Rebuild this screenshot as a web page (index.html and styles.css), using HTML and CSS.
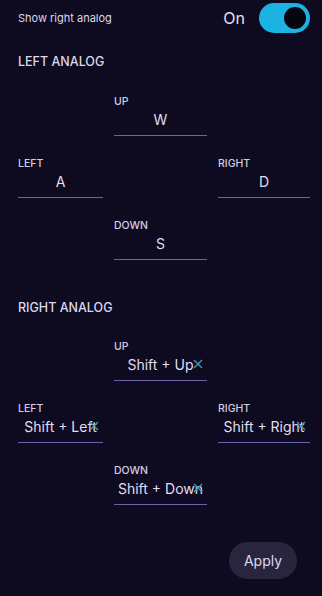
FILE: index.html
```html
<!DOCTYPE html>
<html>
<head>
<meta charset="utf-8">
<link rel="stylesheet" href="styles.css">
</head>
<body>
<div class="page">
  <div class="header">
    <span class="header-label">Show right analog</span>
    <div class="toggle-group">
      <span class="toggle-text">On</span>
      <span class="switch"><span class="knob"></span></span>
    </div>
  </div>

  <div class="section-title">LEFT ANALOG</div>
  <div class="pad">
    <div class="field up"><div class="label">UP</div><div class="value">W</div></div>
    <div class="field left"><div class="label">LEFT</div><div class="value">A</div></div>
    <div class="field right"><div class="label">RIGHT</div><div class="value">D</div></div>
    <div class="field down"><div class="label">DOWN</div><div class="value">S</div></div>
  </div>

  <div class="section-title second">RIGHT ANALOG</div>
  <div class="pad second">
    <div class="field up"><div class="label">UP</div><div class="value">Shift + Up<svg class="clear" viewBox="0 0 10 10"><path d="M1 1 L9 9 M9 1 L1 9"/></svg></div></div>
    <div class="field left"><div class="label">LEFT</div><div class="value">Shift + Left<svg class="clear" viewBox="0 0 10 10"><path d="M1 1 L9 9 M9 1 L1 9"/></svg></div></div>
    <div class="field right"><div class="label">RIGHT</div><div class="value">Shift + Right<svg class="clear" viewBox="0 0 10 10"><path d="M1 1 L9 9 M9 1 L1 9"/></svg></div></div>
    <div class="field down"><div class="label">DOWN</div><div class="value">Shift + Down<svg class="clear" viewBox="0 0 10 10"><path d="M1 1 L9 9 M9 1 L1 9"/></svg></div></div>
  </div>

  <div class="footer">
    <button class="apply">Apply</button>
  </div>
</div>
</body>
</html>
```

FILE: styles.css
```css
html, body {
  margin: 0;
  padding: 0;
  background: #0e0a1f;
}
body {
  font-family: Inter, "Noto Sans", sans-serif;
  color: #dcd8ec;
  width: 322px;
  height: 596px;
  overflow: hidden;
}
.page {
  padding: 0 12px 0 18px;
}
.header {
  height: 36px;
  display: flex;
  align-items: center;
  justify-content: space-between;
}
.header-label {
  font-size: 11px;
  color: #dcd8ec;
}
.toggle-group {
  display: flex;
  align-items: center;
  gap: 14px;
}
.toggle-text {
  font-size: 16px;
  color: #e4e0f0;
}
.switch {
  width: 51px;
  height: 30px;
  border-radius: 15px;
  background: #1cb2e2;
  display: flex;
  align-items: center;
  justify-content: flex-end;
  padding-right: 4px;
  box-sizing: border-box;
}
.knob {
  width: 22px;
  height: 22px;
  border-radius: 50%;
  background: #07050f;
}
.section-title {
  margin-top: 18px;
  font-size: 12.5px;
  line-height: 16px;
  font-weight: 500;
  color: #dcd8ec;
}
.section-title.second {
  margin-top: 40px;
}
.pad {
  margin-top: 25px;
  width: 292px;
  display: grid;
  grid-template-columns: 85px 93px 92px;
  column-gap: 11px;
  row-gap: 21px;
}
.pad.second {
  margin-top: 24px;
}
.field {
  display: flex;
  flex-direction: column;
  border-bottom: 1.5px solid #6b62ab;
  position: relative;
}
.field.up { grid-column: 2; grid-row: 1; }
.field.left { grid-column: 1; grid-row: 2; }
.field.right { grid-column: 3; grid-row: 2; }
.field.down { grid-column: 2; grid-row: 3; }
.label {
  font-size: 10.5px;
  line-height: 12px;
  font-weight: 500;
  color: #d2cee2;
  margin-top: 1px;
  margin-bottom: 1px;
}
.value {
  font-size: 14px;
  line-height: 22px;
  height: 22px;
  padding-bottom: 4px;
  text-align: center;
  color: #e2deef;
  white-space: nowrap;
}
.clear {
  position: absolute;
  right: 4px;
  bottom: 11px;
  width: 10px;
  height: 10px;
  fill: none;
  stroke: #3a9fbf;
  stroke-width: 1.3;
}
.footer {
  display: flex;
  justify-content: flex-end;
  padding-right: 13px;
  margin-top: 37px;
}
.apply {
  width: 68px;
  height: 37px;
  border: none;
  border-radius: 18.5px;
  background: #29253e;
  color: #dcd8ec;
  font-family: Inter, "Noto Sans", sans-serif;
  font-size: 14px;
  padding: 0;
}
```
